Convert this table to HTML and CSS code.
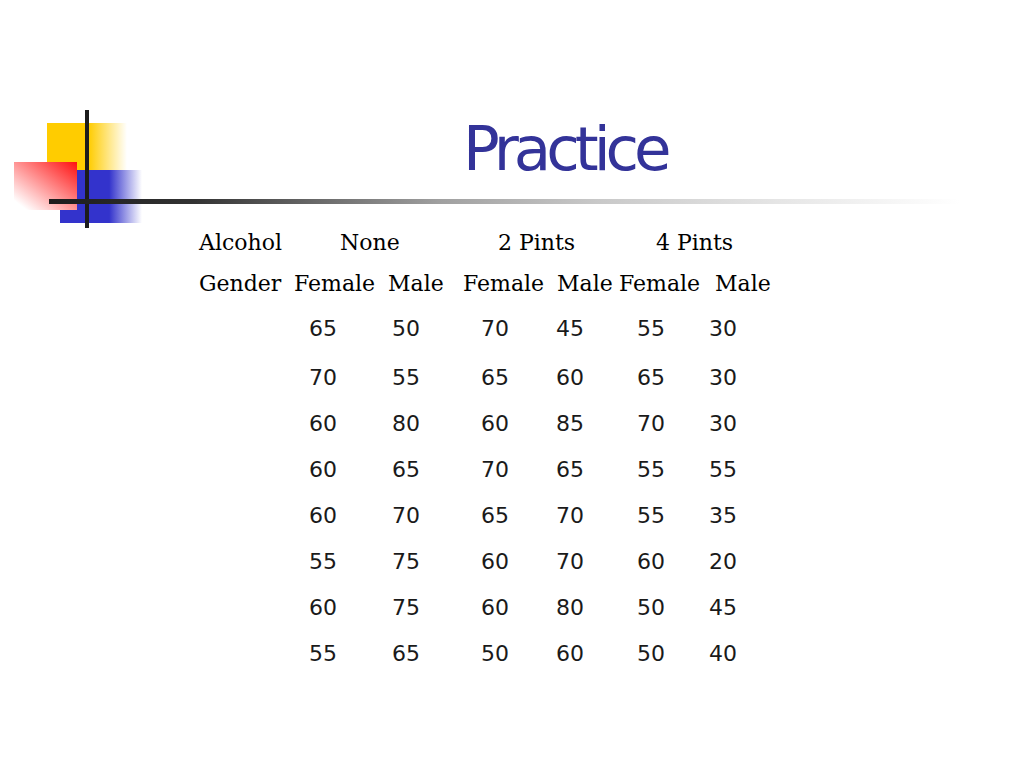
FILE: index.html
```html
<!DOCTYPE html>
<html lang="en">
<head>
<meta charset="utf-8">
<title>Practice</title>
<link rel="stylesheet" href="styles.css">
</head>
<body>
<div class="slide">
  <svg class="logo" width="160" height="140" viewBox="0 100 160 140" aria-hidden="true">
    <defs>
      <linearGradient id="gy" x1="0" y1="0" x2="1" y2="0">
        <stop offset="0" stop-color="#ffcc00"/>
        <stop offset="0.52" stop-color="#ffcc00"/>
        <stop offset="1" stop-color="#ffcc00" stop-opacity="0"/>
      </linearGradient>
      <linearGradient id="gb" x1="0" y1="0" x2="1" y2="0">
        <stop offset="0" stop-color="#3333cc"/>
        <stop offset="0.6" stop-color="#3333cc"/>
        <stop offset="1" stop-color="#3333cc" stop-opacity="0"/>
      </linearGradient>
      <linearGradient id="gr" x1="1" y1="0" x2="0" y2="1">
        <stop offset="0" stop-color="#ff1010"/>
        <stop offset="0.9" stop-color="#ffffff"/>
        <stop offset="1" stop-color="#ffffff"/>
      </linearGradient>
    </defs>
    <rect x="47" y="123" width="80" height="47" fill="url(#gy)"/>
    <rect x="60" y="170" width="82" height="53" fill="url(#gb)"/>
    <rect x="14" y="162" width="63" height="48" fill="url(#gr)"/>
    <rect x="85" y="110" width="4" height="118" fill="#1c1c1c"/>
  </svg>
  <h1 class="title">Practice</h1>
  <div class="rule"></div>
  <div class="data">
    <div class="hrow">
      <span class="c141">Alcohol</span>
      <span class="c158">None</span>
      <span class="c158">2 Pints</span>
      <span>4 Pints</span>
    </div>
    <div class="hrow">
      <span class="c95">Gender</span>
      <span class="c94">Female</span>
      <span class="c75">Male</span>
      <span class="c94">Female</span>
      <span class="c62">Male</span>
      <span class="c96">Female</span>
      <span>Male</span>
    </div>
    <div class="nums">
      <div class="nrow"><span>65</span><span>50</span><span>70</span><span>45</span><span>55</span><span>30</span></div>
      <div class="nrow"><span>70</span><span>55</span><span>65</span><span>60</span><span>65</span><span>30</span></div>
      <div class="nrow"><span>60</span><span>80</span><span>60</span><span>85</span><span>70</span><span>30</span></div>
      <div class="nrow"><span>60</span><span>65</span><span>70</span><span>65</span><span>55</span><span>55</span></div>
      <div class="nrow"><span>60</span><span>70</span><span>65</span><span>70</span><span>55</span><span>35</span></div>
      <div class="nrow"><span>55</span><span>75</span><span>60</span><span>70</span><span>60</span><span>20</span></div>
      <div class="nrow"><span>60</span><span>75</span><span>60</span><span>80</span><span>50</span><span>45</span></div>
      <div class="nrow"><span>55</span><span>65</span><span>50</span><span>60</span><span>50</span><span>40</span></div>
    </div>
  </div>
</div>
</body>
</html>
```
FILE: styles.css
```css
html, body {
  margin: 0;
  padding: 0;
  background: #ffffff;
}

.slide {
  position: relative;
  width: 1024px;
  height: 768px;
  overflow: hidden;
  padding-top: 118px;
  box-sizing: border-box;
}

.logo {
  position: absolute;
  left: 0;
  top: 100px;
}

.title {
  margin: 0;
  padding-left: 463px;
  font-family: "DejaVu Sans", sans-serif;
  font-weight: normal;
  font-size: 61px;
  line-height: 62px;
  letter-spacing: -5px;
  color: #333399;
}

.rule {
  position: relative;
  margin-top: 19px;
  margin-left: 49px;
  width: 911px;
  height: 5px;
  background: linear-gradient(to right, #1c1c1c 0%, #333333 16%, #a0a0a0 43%, #c8c8c8 60%, #e8e8e8 82%, #ffffff 100%);
}

.data {
  margin-top: 18px;
  margin-left: 199px;
  color: #000000;
}

.hrow {
  display: flex;
  height: 41px;
  line-height: 41px;
  font-family: "DejaVu Serif", serif;
  font-size: 22px;
  white-space: nowrap;
}

.c141 { width: 141px; }
.c158 { width: 158px; }
.c95 { width: 95px; }
.c94 { width: 94px; }
.c75 { width: 75px; }
.c62 { width: 62px; }
.c96 { width: 96px; }

.nums {
  margin-top: 2px;
}

.nrow {
  display: flex;
  height: 46px;
  line-height: 46px;
  padding-left: 110px;
  font-family: "DejaVu Sans", sans-serif;
  font-size: 22px;
  color: #1a1a1a;
}

.nrow:nth-child(2) {
  margin-top: 3px;
}

.nrow span:nth-child(1) { width: 83px; }
.nrow span:nth-child(2) { width: 89px; }
.nrow span:nth-child(3) { width: 75px; }
.nrow span:nth-child(4) { width: 81px; }
.nrow span:nth-child(5) { width: 72px; }
```
